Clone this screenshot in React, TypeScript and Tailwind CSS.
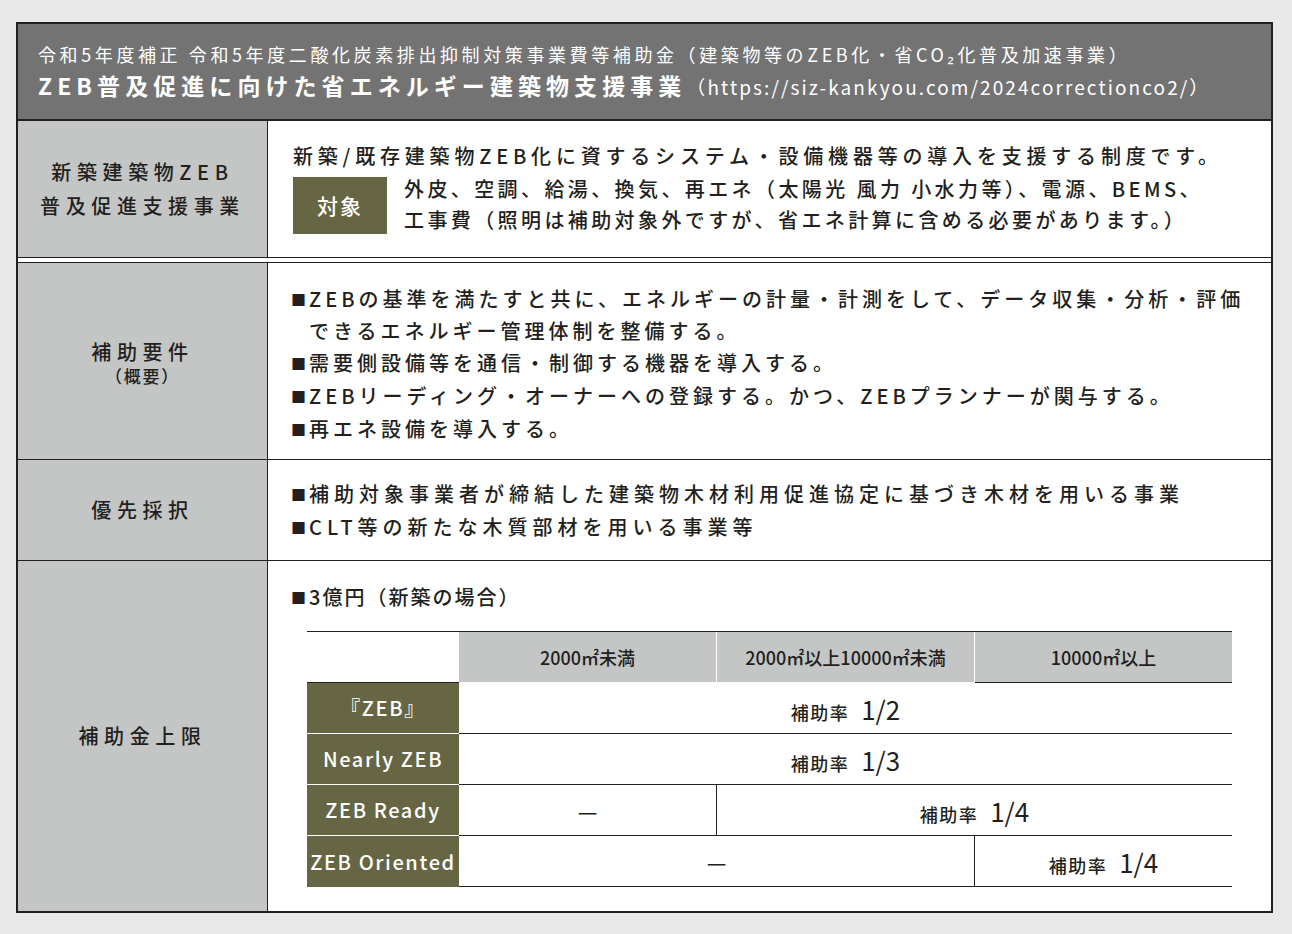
const font = { fontFamily: '"Noto Sans CJK JP", "Noto Sans", sans-serif' };

function Label({ children }: { children: React.ReactNode }) {
  return (
    <div className="bg-[#c4c6c6] border-r border-[#231f20] flex flex-col items-center justify-center text-center text-[20px] font-medium text-[#231f20] tracking-[0.28em] leading-[34px]">
      {children}
    </div>
  );
}

function Bullet({ children }: { children: React.ReactNode }) {
  return (
    <div className="flex">
      <span className="text-[15px] mr-[3px] mt-[1px] tracking-normal">■</span>
      <span>{children}</span>
    </div>
  );
}

function Rate({ v }: { v: string }) {
  return (
    <span className="flex items-baseline gap-3">
      <span className="text-[18px] font-medium tracking-[0.08em]">補助率</span>
      <span className="text-[26px]">{v}</span>
    </span>
  );
}

export default function App() {
  const head = "bg-[#c4c6c6] flex items-center justify-center text-[18px] font-medium h-[51px]";
  const rowLabel = "bg-[#676644] text-white flex items-center justify-center text-[20px] font-medium tracking-[0.08em] h-[51px] border-b border-white";
  const cell = "flex items-center justify-center h-[51px] border-b border-[#231f20] text-[#231f20]";
  return (
    <div className="w-[1292px] h-[934px] bg-[#e8e8e8] pt-[22px] pl-[16px]" style={font}>
      <div className="w-[1257px] h-[891px] border-2 border-[#231f20] bg-white flex flex-col">
        <div className="bg-[#737373] text-white h-[97px] px-[20px] pt-[16px] border-b-2 border-[#231f20] whitespace-nowrap">
          <div className="text-[18px] tracking-[0.2em] leading-[28px]">
            令和5年度補正 令和5年度二酸化炭素排出抑制対策事業費等補助金（建築物等のZEB化・省CO₂化普及加速事業）
          </div>
          <div className="flex items-baseline leading-[34px]">
            <span className="text-[23px] font-bold tracking-[0.22em]">ZEB普及促進に向けた省エネルギー建築物支援事業</span>
            <span className="text-[19px] tracking-[0.11em]">（https://siz-kankyou.com/2024correctionco2/）</span>
          </div>
        </div>
        <div className="grid grid-cols-[250px_1fr] h-[137px] border-b border-[#231f20]">
          <Label>
            <div>新築建築物ZEB</div>
            <div>普及促進支援事業</div>
          </Label>
          <div className="pl-[25px] pt-[20px] text-[20px] font-medium text-[#231f20] tracking-[0.24em] whitespace-nowrap">
            <div className="leading-[30px]">新築/既存建築物ZEB化に資するシステム・設備機器等の導入を支援する制度です。</div>
            <div className="flex mt-[6px]">
              <div className="bg-[#676644] text-white w-[94px] h-[57px] flex items-center justify-center font-medium text-[21px] tracking-[0.1em] shrink-0">対象</div>
              <div className="ml-[17px] leading-[31px] -mt-[4px] tracking-[0.17em]">
                外皮、空調、給湯、換気、再エネ（太陽光 風力 小水力等）、電源、BEMS、<br />
                工事費（照明は補助対象外ですが、省エネ計算に含める必要があります。）
              </div>
            </div>
          </div>
        </div>
        <div className="grid grid-cols-[250px_1fr] h-[198px] border-t border-[#231f20] mt-[4px] border-b">
          <Label>
            <div>補助要件</div>
            <div className="text-[17px] leading-[22px] -mt-1 tracking-[0.1em]">（概要）</div>
          </Label>
          <div className="pl-[23px] pt-[20px] text-[20px] font-medium text-[#231f20] tracking-[0.2em] leading-[32px] whitespace-nowrap">
            <Bullet>ZEBの基準を満たすと共に、エネルギーの計量・計測をして、データ収集・分析・評価<br />できるエネルギー管理体制を整備する。</Bullet>
            <Bullet>需要側設備等を通信・制御する機器を導入する。</Bullet>
            <Bullet>ZEBリーディング・オーナーへの登録する。かつ、ZEBプランナーが関与する。</Bullet>
            <Bullet>再エネ設備を導入する。</Bullet>
          </div>
        </div>
        <div className="grid grid-cols-[250px_1fr] h-[101px] border-b border-[#231f20]">
          <Label>優先採択</Label>
          <div className="pl-[23px] pt-[18px] text-[20px] font-medium text-[#231f20] tracking-[0.25em] leading-[32px] whitespace-nowrap">
            <Bullet>補助対象事業者が締結した建築物木材利用促進協定に基づき木材を用いる事業</Bullet>
            <Bullet>CLT等の新たな木質部材を用いる事業等</Bullet>
          </div>
        </div>
        <div className="grid grid-cols-[250px_1fr] flex-1">
          <Label>補助金上限</Label>
          <div className="pl-[23px] pt-[20px] text-[#231f20]">
            <div className="text-[20px] font-medium tracking-[0.1em] leading-[32px]">
              <Bullet>3億円（新築の場合）</Bullet>
            </div>
            <div className="ml-[16px] mt-[17px] w-[925px] border-t border-[#231f20] grid grid-cols-[152px_258px_258px_257px]">
              <div className="h-[51px] border-b border-[#231f20]" />
              <div className={head + " border-b border-[#231f20] border-r border-white"}>2000㎡未満</div>
              <div className={head + " border-b border-[#231f20] border-r border-white"}>2000㎡以上10000㎡未満</div>
              <div className={head + " border-b border-[#231f20]"}>10000㎡以上</div>

              <div className={rowLabel}>『ZEB』</div>
              <div className={cell + " col-span-3"}><Rate v="1/2" /></div>

              <div className={rowLabel}>Nearly ZEB</div>
              <div className={cell + " col-span-3"}><Rate v="1/3" /></div>

              <div className={rowLabel}>ZEB Ready</div>
              <div className={cell + " border-r text-[22px]"}>—</div>
              <div className={cell + " col-span-2"}><Rate v="1/4" /></div>

              <div className={rowLabel + " border-b-0 tracking-[0.02em]"}>ZEB Oriented</div>
              <div className={cell + " col-span-2 border-r text-[22px]"}>—</div>
              <div className={cell}><Rate v="1/4" /></div>
            </div>
          </div>
        </div>
      </div>
    </div>
  );
}
